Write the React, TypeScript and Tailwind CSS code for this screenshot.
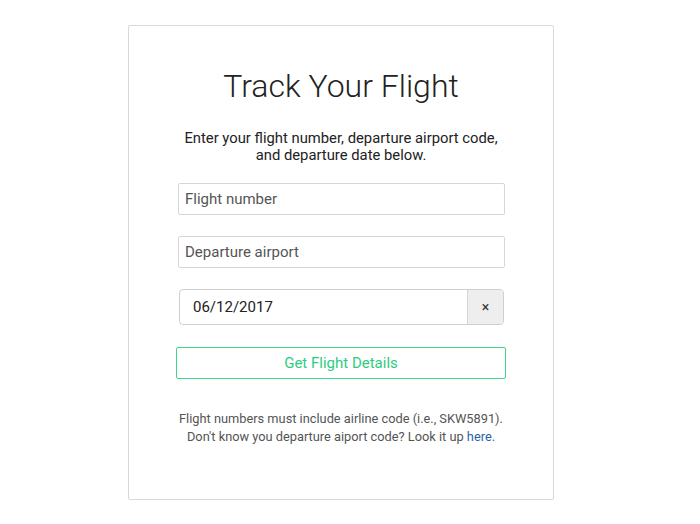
export default function App() {
  return (
    <div className="min-h-[524px] w-[700px] bg-white pt-[25px] font-['Roboto',sans-serif]">
      <div className="ml-[128px] h-[475px] w-[426px] rounded-[2px] border border-[#d9d9d9] bg-white">
        <h1 className="mt-[41px] text-center text-[32px] font-light leading-[38px] text-[#222]">Track Your Flight</h1>
        <p className="mt-[25px] text-center text-[14.8px] leading-[17px] text-[#222]">
          Enter your flight number, departure airport code,
          <br />
          and departure date below.
        </p>

        <div className="mx-[49px] mt-[19px] flex flex-col">
          <input
            placeholder="Flight number"
            className="h-[32px] w-[327px] rounded-[2px] border border-[#d6d6d6] px-[6px] text-[15px] text-[#333] placeholder:text-[#555] outline-none"
          />
          <input
            placeholder="Departure airport"
            className="mt-[21px] h-[32px] w-[327px] rounded-[2px] border border-[#d6d6d6] px-[6px] text-[15px] text-[#333] placeholder:text-[#555] outline-none"
          />
          {/* date picker */}
          <div className="mt-[21px] ml-[1px] flex h-[36px] w-[325px] overflow-hidden rounded-[4px] border border-[#cfcfcf]">
            <input
              defaultValue="06/12/2017"
              className="h-full flex-1 px-[13px] text-[15px] text-[#222] outline-none"
            />
            <button className="flex w-[36px] items-center justify-center border-l border-[#d6d6d6] bg-[#eeeeee] text-[14px] text-[#333]">
              ×
            </button>
          </div>
          <button className="mt-[22px] -ml-[2px] h-[32px] w-[330px] rounded-[2px] border border-[#3ed88c] text-[15px] text-[#2ecc80]">
            Get Flight Details
          </button>
        </div>

        <p className="mt-[31px] text-center text-[12.8px] leading-[18px] text-[#555]">
          Flight numbers must include airline code (i.e., SKW5891).
          <br />
          Don't know you departure aiport code? Look it up <a className="text-[#2b63a8]">here.</a>
        </p>
      </div>
    </div>
  );
}
